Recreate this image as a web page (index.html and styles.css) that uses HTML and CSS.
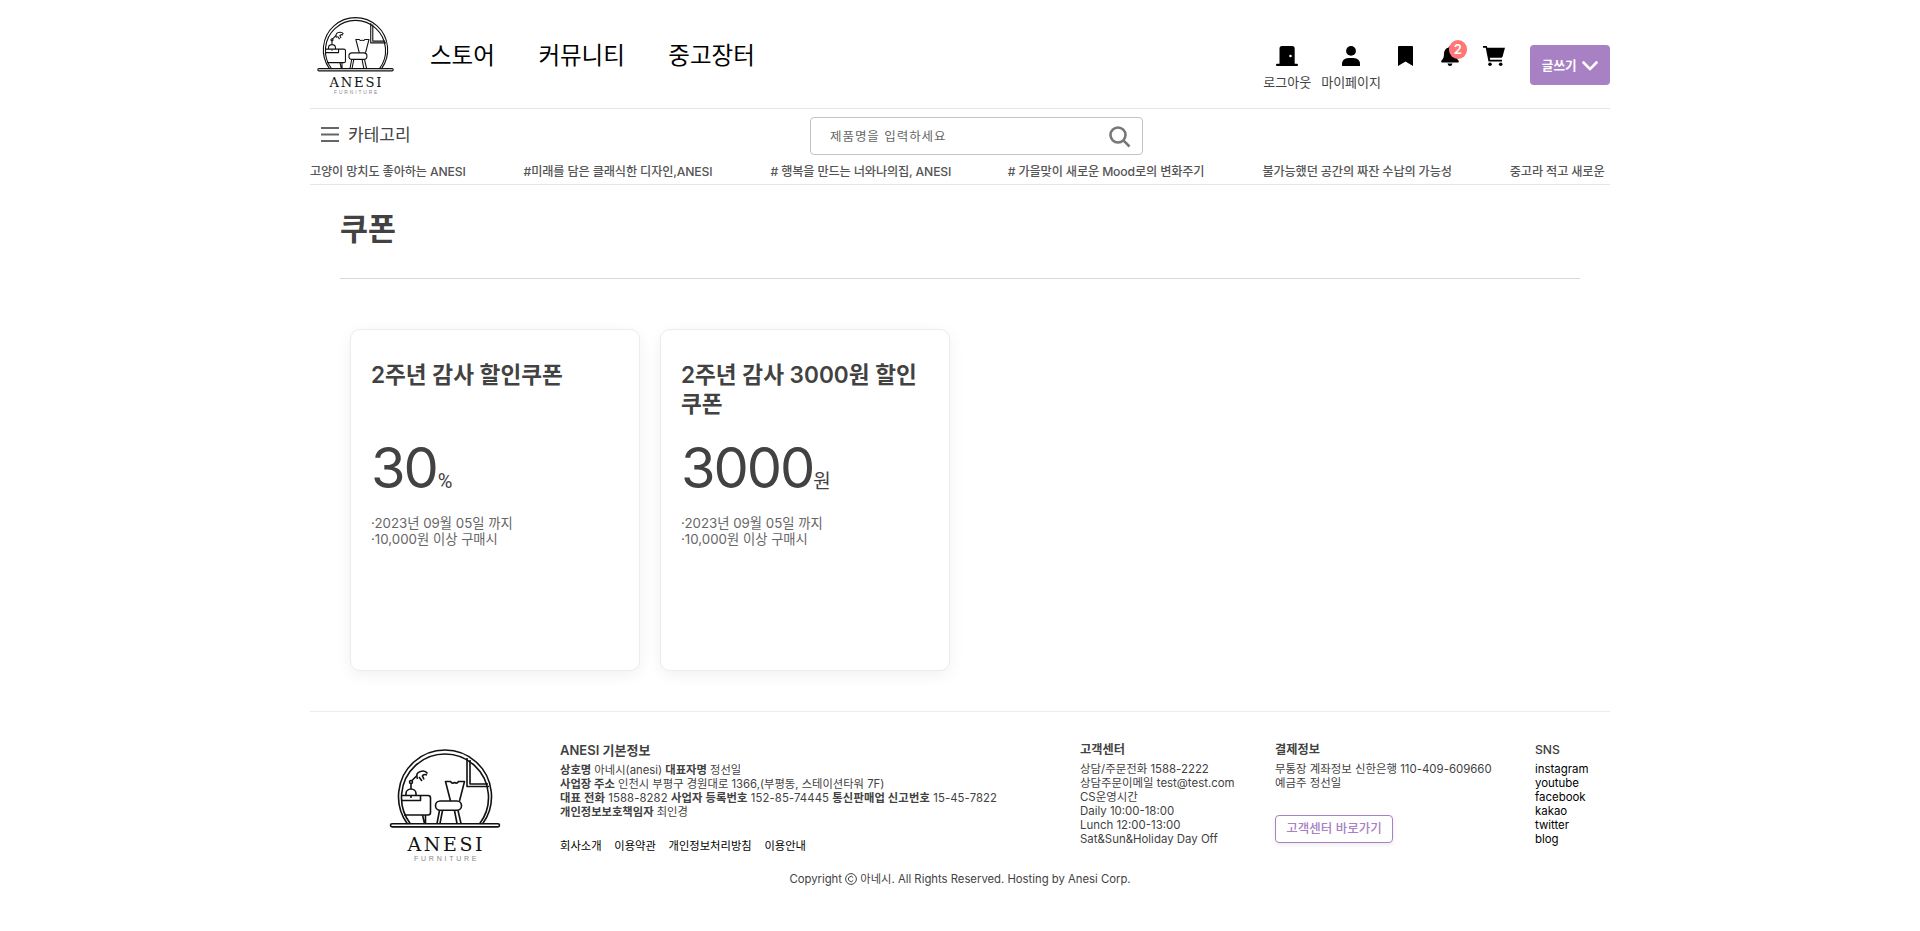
FILE: index.html
```html
<!DOCTYPE html>
<html lang="ko">
<head>
<meta charset="utf-8">
<title>ANESI</title>
<link rel="stylesheet" href="styles.css">
</head>
<body>
<div class="page">
  <header class="top">
    <svg class="top-logo" viewBox="15 10 120 130">
      <g id="logo">
        <g fill="none" stroke="#111" stroke-width="1.6" stroke-linejoin="round">
          <path d="M37.500 95A46.500 46.500 0 1 1 112.500 95" />
          <path d="M40.500 95A43.500 43.500 0 1 1 109.500 95" />
          <path d="M97 29V57.500H119M100 31V55H118" />
          <rect x="20.500" y="94.700" width="109" height="3.200" rx="1.600" />
          <path d="M32 66.500H58Q60.500 66.500 60.500 69V83.500Q60.500 86 58 86H34M32 71.500H50.500V66.500M52.500 86L54.500 94.500M55.500 86V94.500" />
          <path d="M36 66.500V64.500A5 4.500 0 0 1 46 64.500V66.500M41 67V69M41 60V54.500M41.500 52L47 46.500" />
          <path d="M47.500 50Q45 44 50.500 42.500Q55 41 57.500 44.500M49 48L52 52M52 47.500Q53.500 44.500 57 46M52.500 47L54 50.500" />
          <circle cx="41" cy="53" r="1.500" />
          <path d="M80.500 72L75.500 52.500H80.500Q82 55 84.500 53.500Q87 55 88.500 52.500H94.500L89.500 72" />
          <rect x="65.500" y="72" width="26" height="9.300" rx="4.600" />
          <path d="M69.500 81.500L67 94.500M72.500 81.500L70 94.500M84.500 81.500L87 94.500M88 81.500L91 94.500" />
        </g>
        <text x="37.500" y="121.500" textLength="75" class="logo-name">ANESI</text>
        <text x="44" y="131.700" textLength="62.500" class="logo-sub">FURNITURE</text>
      </g>
    </svg>
    <nav class="nav"><a>스토어</a><a>커뮤니티</a><a>중고장터</a></nav>
    <div class="tools">
      <a class="tool logout"><svg width="22" height="20" viewBox="0 0 22 20"><path fill-rule="evenodd" d="M3.500 17.800V2.500Q3.500 0 6 0H16Q18.700 0 18.700 2.500V17.800H21Q22 17.800 22 19Q22 20 21 20H1Q0 20 0 19Q0 17.800 1 17.800ZM14.500 8.700A1.300 1.300 0 1 0 14.500 11.300A1.300 1.300 0 1 0 14.500 8.700Z" /></svg><span>로그아웃</span></a>
      <a class="tool mypage"><svg width="18" height="20" viewBox="0 0 18 20"><circle cx="9" cy="4.900" r="4.900" /><path d="M0 20V18.500Q0 12 6.500 12H11.500Q18 12 18 18.500V20Z" /></svg><span>마이페이지</span></a>
      <a class="tool mark"><svg width="15" height="20" viewBox="0 0 15 20"><path d="M0 1Q0 0 1 0H14Q15 0 15 1V20L7.500 15.500L0 20Z" /></svg></a>
      <a class="tool bell"><svg width="18" height="20" viewBox="0 0 18 20"><path d="M9 0Q10.300 0 10.300 1.500Q15 2.700 15 8Q15 12.500 17.500 14.500Q18.300 16.500 17 16.500H1Q-.3 16.500 .5 14.500Q3 12.500 3 8Q3 2.700 7.700 1.500Q7.700 0 9 0ZM6.500 17.500H11.500Q11 20 9 20Q7 20 6.500 17.500Z" /></svg><b class="badge">2</b></a>
      <a class="tool cart"><svg width="22" height="20" viewBox="0 0 22 20"><path d="M0 0H3.700L4.400 1.800H22L19.500 10.800Q19.200 11.800 18 11.800H6.800L7.100 13.700H19V15.500H5.500L2.700 1.700H0Z" /><circle cx="7" cy="18.200" r="1.800" /><circle cx="17.700" cy="18.200" r="1.800" /></svg></a>
      <button class="write"><span>글쓰기</span><svg width="16" height="10" viewBox="0 0 16 10"><path d="M1.500 1.500L8 8.200L14.500 1.500" /></svg></button>
    </div>
  </header>
  <div class="bar">
    <a class="category"><svg width="18" height="15" viewBox="0 0 18 15"><path d="M0 1H18M0 7.500H18M0 14H18" /></svg><span>카테고리</span></a>
    <div class="search"><span>제품명을 입력하세요</span><svg width="22" height="22" viewBox="0 0 22 22"><circle cx="9" cy="9" r="7.500" /><path d="M14.400 14.400L20.500 20.500" /></svg></div>
  </div>
  <div class="ticker">
    <span>고양이 망치도 좋아하는 ANESI</span><span>#미래를 담은 클래식한 디자인,ANESI</span><span># 행복을 만드는 너와나의집, ANESI</span><span class="near"># 가을맞이 새로운 Mood로의 변화주기</span><span>불가능했던 공간의 짜잔 수납의 가능성</span><span>중고라 적고 새로운</span>
  </div>
  <main class="main">
    <h1 class="title">쿠폰</h1>
    <div class="cards">
      <article class="card">
        <h2 class="name">2주년 감사 할인쿠폰</h2>
        <p class="value"><span class="num">30</span><span class="unit percent">%</span></p>
        <p class="cond">·2023년 09월 05일 까지<br>·10,000원 이상 구매시</p>
      </article>
      <article class="card">
        <h2 class="name">2주년 감사 3000원 할인<br>쿠폰</h2>
        <p class="value"><span class="num">3000</span><span class="unit">원</span></p>
        <p class="cond">·2023년 09월 05일 까지<br>·10,000원 이상 구매시</p>
      </article>
    </div>
  </main>
  <footer class="footer">
    <div class="columns">
      <svg class="foot-logo" viewBox="15 10 120 130"><use href="#logo" /></svg>
      <section class="info">
        <h3 class="head lead">ANESI 기본정보</h3>
        <p><b>상호명</b> 아네시(anesi) <b>대표자명</b> 정선일</p>
        <p><b>사업장 주소</b> 인천시 부평구 경원대로 1366,(부평동, 스테이션타워 7F)</p>
        <p class="numbers"><b>대표 전화</b> 1588-8282 <b>사업자 등록번호</b> 152-85-74445 <b>통신판매업 신고번호</b> 15-45-7822</p>
        <p><b>개인정보보호책임자</b> 최인경</p>
        <div class="links"><a>회사소개</a><a>이용약관</a><a>개인정보처리방침</a><a>이용안내</a></div>
      </section>
      <section class="col">
        <h3 class="head">고객센터</h3>
        <p>상담/주문전화 1588-2222</p>
        <p>상담주문이메일 test@test.com</p>
        <p>CS운영시간</p>
        <p>Daily 10:00-18:00</p>
        <p>Lunch 12:00-13:00</p>
        <p>Sat&amp;Sun&amp;Holiday Day Off</p>
      </section>
      <section class="col">
        <h3 class="head">결제정보</h3>
        <p>무통장 계좌정보 신한은행 110-409-609660</p>
        <p>예금주 정선일</p>
        <a class="help">고객센터 바로가기</a>
      </section>
      <section class="col sns">
        <h3 class="head">SNS</h3>
        <p><a>instagram</a></p><p><a>youtube</a></p><p><a>facebook</a></p><p><a>kakao</a></p><p><a>twitter</a></p><p><a>blog</a></p>
      </section>
    </div>
    <p class="copy">Copyright <svg width="12" height="12" viewBox="0 0 12 12"><circle cx="6" cy="6" r="5.400" /><path d="M8.200 4.600A2.600 2.600 0 1 0 8.200 7.400" /></svg> 아네시. All Rights Reserved. Hosting by Anesi Corp.</p>
  </footer>
</div>
</body>
</html>
```
FILE: styles.css
```css
* { box-sizing: border-box; margin: 0; padding: 0; }
body { background: #fff; color: #424242; font-family: Inter, "Noto Sans CJK KR", sans-serif; overflow: hidden; }
.page { width: 1300px; margin: 0 auto; }
.logo-name { font: 19px "DejaVu Serif", serif; fill: #111; }
.logo-sub { font: 7px "Liberation Sans", sans-serif; fill: #888; }

.top { height: 109px; border-bottom: 1px solid #e5e5e5; display: flex; }
.top-logo { width: 83px; height: 90px; margin: 9.5px 0 0 4px; }
.nav { display: flex; gap: 43.5px; margin: 37.5px 0 0 33px; font-size: 23.5px; font-weight: 400; line-height: 36px; color: #000; }
.tools { display: flex; margin-left: auto; padding-top: 46px; }
.tool { display: flex; flex-direction: column; align-items: center; position: relative; font-size: 13px; line-height: 18px; }
.tool svg { fill: #000; margin-bottom: 7px; }
.mypage { margin-left: 10px; }
.mark { margin-left: 17px; }
.bell { margin-left: 28px; }
.cart { margin-left: 24px; }
.badge { position: absolute; left: 7.5px; top: -6px; width: 18.5px; height: 18.5px; border-radius: 50%; background: #ff7777; color: #fff; font-size: 13px; font-weight: 600; text-align: center; }
.write { width: 80px; height: 40px; margin: -1px 0 0 25px; border: 0; border-radius: 4px; background: #a781c3; color: #fff; display: flex; align-items: center; justify-content: center; gap: 5.5px; font: 700 12.6px/18px Inter, "Noto Sans CJK KR", sans-serif; }
.write span { padding-top: 1px; }
.write svg { margin-top: 1px; fill: none; stroke: #fff; stroke-width: 2.6; stroke-linecap: round; stroke-linejoin: round; }

.bar { height: 49px; display: flex; padding-top: 8px; }
.category { display: flex; align-items: center; gap: 9px; width: 500px; padding-left: 11px; height: 34px; font-size: 17px; line-height: 24px; }
.category svg { fill: none; stroke: #666; stroke-width: 2; }
.category span { padding-top: 1px; }
.search { width: 333px; height: 38px; border: 1px solid #c4c4c4; border-radius: 4px; display: flex; align-items: center; justify-content: space-between; padding: 0 11px 0 19px; font-size: 12.5px; letter-spacing: .95px; color: #666; }
.search span { padding-bottom: 1px; }
.search svg { margin-top: 1px; fill: none; stroke: #777; stroke-width: 2.6; }
.ticker { height: 27px; border-bottom: 1px solid #e5e5e5; display: flex; gap: 58px; font-size: 12.2px; font-weight: 500; letter-spacing: -.15px; line-height: 27px; white-space: nowrap; overflow: hidden; color: #555; }
.near { margin-left: -1.5px; }

.main { padding: 0 30px; height: 526px; }
.title { height: 94px; border-bottom: 1px solid #d8d8d8; padding-top: 24px; font-size: 30.4px; font-weight: 600; line-height: 40px; }
.cards { display: flex; gap: 20px; padding: 50px 10px; }
.card { width: 290px; height: 342px; border: 1px solid #ececec; border-radius: 10px; box-shadow: 0 4px 16px rgba(0,0,0,.06); padding: 30px 20px; }
.name { height: 73px; font-size: 22.6px; font-weight: 600; line-height: 29px; white-space: nowrap; }
.value { height: 70px; line-height: 70px; white-space: nowrap; }
.num { font-size: 56px; letter-spacing: -2.1px; }
.unit { font-size: 19px; }
.percent { font-family: Roboto, sans-serif; font-size: 20px; margin-left: 1px; }
.cond { margin-top: 12px; font-size: 13.3px; line-height: 16px; color: #666; }

.footer { border-top: 1px solid #ececec; font-size: 11.3px; line-height: 14px; }
.columns { display: grid; grid-template-columns: 250px 520px 195px 260px 75px; padding-top: 29px; height: 155px; white-space: nowrap; }
.foot-logo { width: 120px; height: 130px; margin: -2px 0 0 75px; }
.head { font-size: 12.2px; font-weight: 600; line-height: 18px; margin-bottom: 3px; }
.lead { font-size: 13px; margin-bottom: 4px; }
.info b { font-weight: 600; }
.numbers { letter-spacing: .115px; }
.links { display: flex; gap: 12.7px; margin-top: 20px; color: #000; }
.col { font-size: 11.43px; }
.help { display: flex; width: 118px; height: 28px; margin-top: 25px; border: 1px solid #a781c3; border-radius: 4px; align-items: center; justify-content: center; color: #a781c3; font-size: 12.5px; font-weight: 500; box-shadow: 0 2px 4px rgba(0,0,0,.08); }
.sns a { color: #000; }
.sns .head { font-weight: 500; }
.copy { text-align: center; padding-top: 5px; }
.copy svg { vertical-align: -2px; fill: none; stroke: #424242; }
```
